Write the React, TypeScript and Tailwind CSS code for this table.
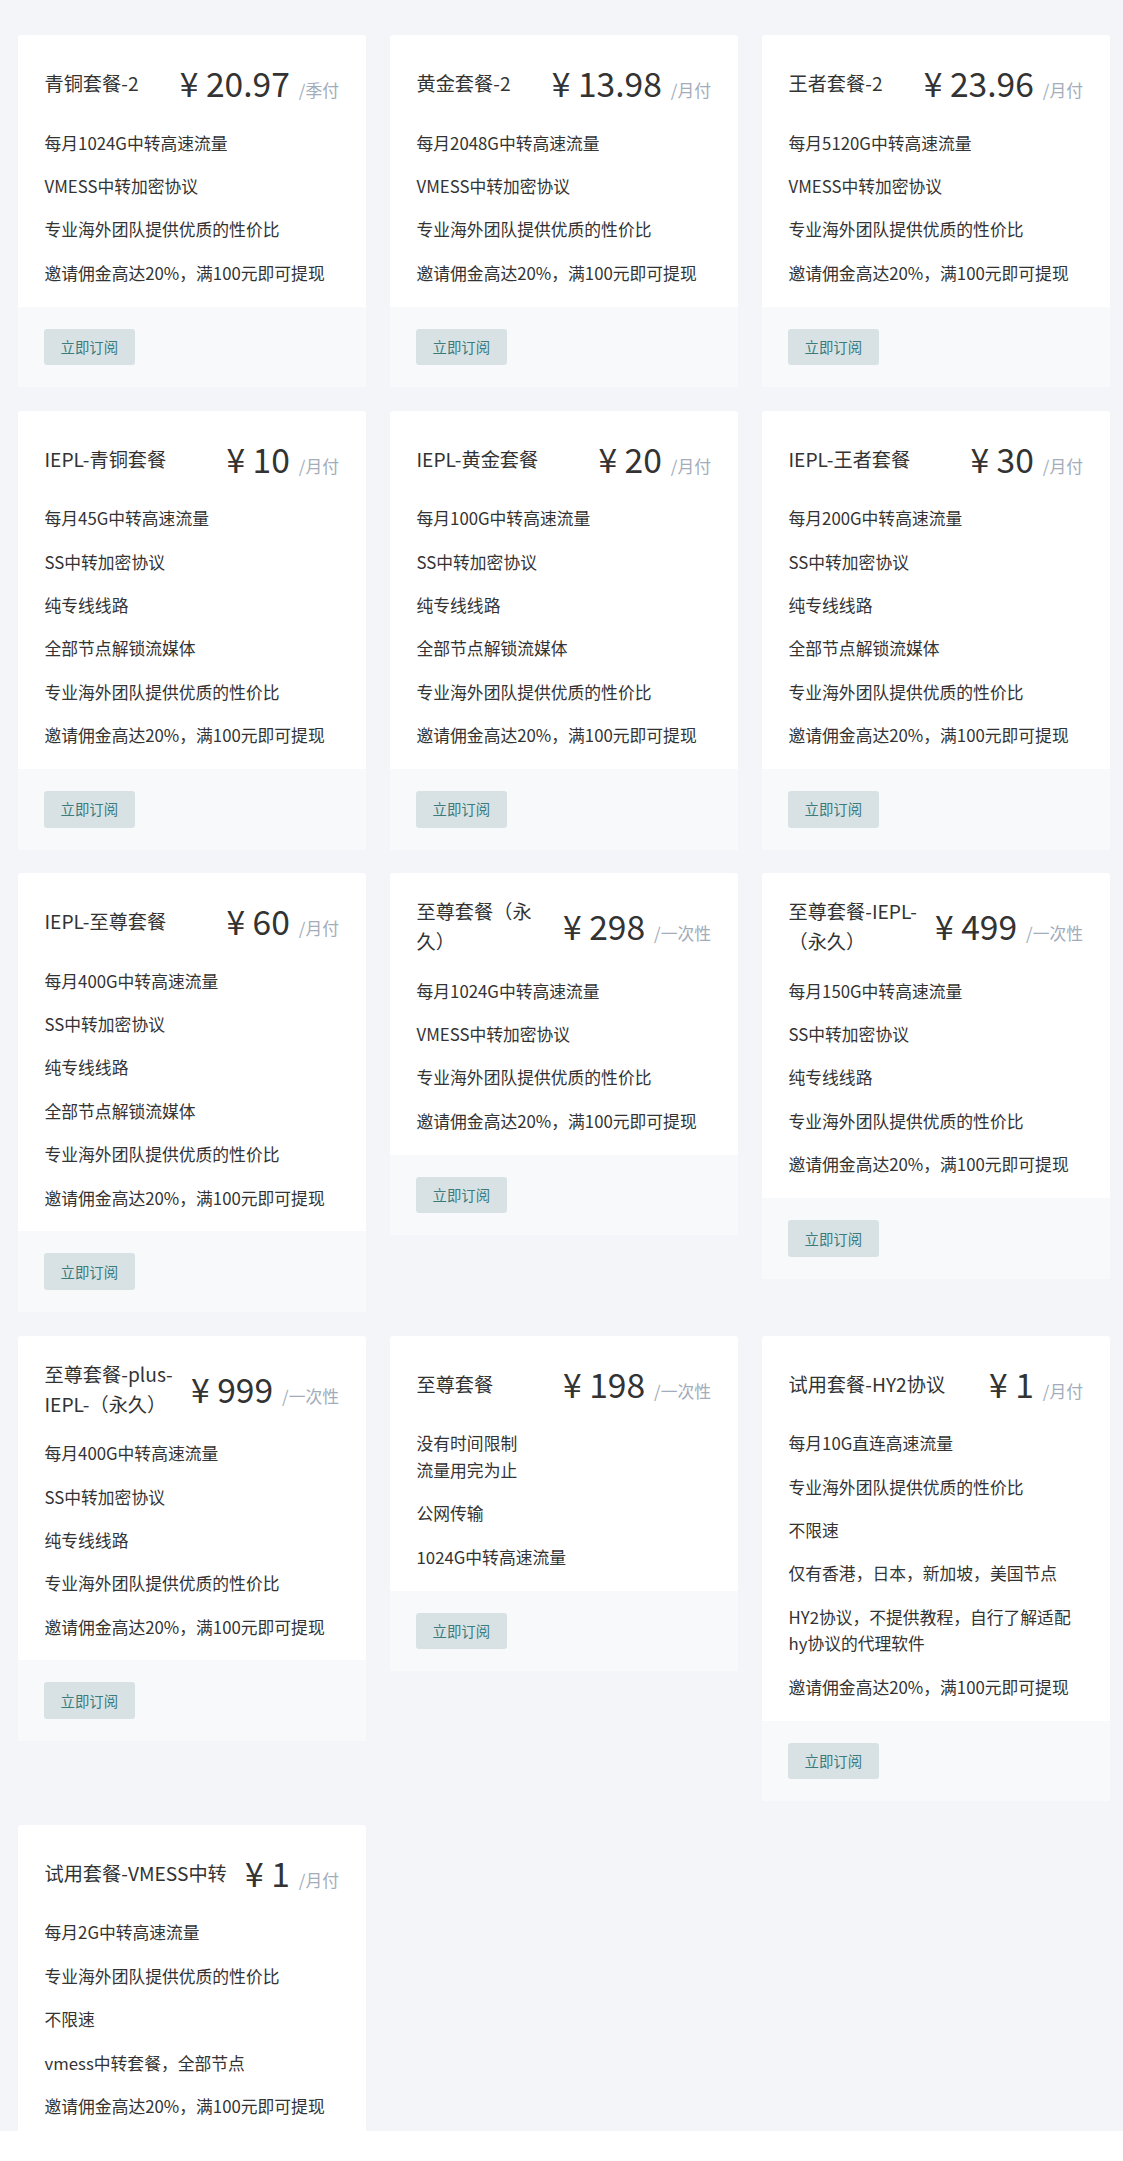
import React from "react";

type Plan = {
  name: string;
  price: string;
  period: string;
  features: string[];
};

const common = "专业海外团队提供优质的性价比";
const invite = "邀请佣金高达20%，满100元即可提现";

const plans: Plan[] = [
  { name: "青铜套餐-2", price: "20.97", period: "/季付", features: ["每月1024G中转高速流量", "VMESS中转加密协议", common, invite] },
  { name: "黄金套餐-2", price: "13.98", period: "/月付", features: ["每月2048G中转高速流量", "VMESS中转加密协议", common, invite] },
  { name: "王者套餐-2", price: "23.96", period: "/月付", features: ["每月5120G中转高速流量", "VMESS中转加密协议", common, invite] },
  { name: "IEPL-青铜套餐", price: "10", period: "/月付", features: ["每月45G中转高速流量", "SS中转加密协议", "纯专线线路", "全部节点解锁流媒体", common, invite] },
  { name: "IEPL-黄金套餐", price: "20", period: "/月付", features: ["每月100G中转高速流量", "SS中转加密协议", "纯专线线路", "全部节点解锁流媒体", common, invite] },
  { name: "IEPL-王者套餐", price: "30", period: "/月付", features: ["每月200G中转高速流量", "SS中转加密协议", "纯专线线路", "全部节点解锁流媒体", common, invite] },
  { name: "IEPL-至尊套餐", price: "60", period: "/月付", features: ["每月400G中转高速流量", "SS中转加密协议", "纯专线线路", "全部节点解锁流媒体", common, invite] },
  { name: "至尊套餐（永久）", price: "298", period: "/一次性", features: ["每月1024G中转高速流量", "VMESS中转加密协议", common, invite] },
  { name: "至尊套餐-IEPL-（永久）", price: "499", period: "/一次性", features: ["每月150G中转高速流量", "SS中转加密协议", "纯专线线路", common, invite] },
  { name: "至尊套餐-plus-IEPL-（永久）", price: "999", period: "/一次性", features: ["每月400G中转高速流量", "SS中转加密协议", "纯专线线路", common, invite] },
  { name: "至尊套餐", price: "198", period: "/一次性", features: ["没有时间限制\n流量用完为止", "公网传输", "1024G中转高速流量"] },
  {
    name: "试用套餐-HY2协议",
    price: "1",
    period: "/月付",
    features: ["每月10G直连高速流量", common, "不限速", "仅有香港，日本，新加坡，美国节点", "HY2协议，不提供教程，自行了解适配hy协议的代理软件", invite],
  },
  { name: "试用套餐-VMESS中转", price: "1", period: "/月付", features: ["每月2G中转高速流量", common, "不限速", "vmess中转套餐，全部节点", invite] },
];

const PlanCard = ({ plan }: { plan: Plan }) => (
  <div className="overflow-hidden rounded-[3px] bg-white">
    <div className="px-[27px] pb-[20px] pt-[23px]">
      <div className="flex items-center gap-3">
        <h3 className="flex-1 text-[19.2px] leading-[30px] font-normal text-[#333]">{plan.name}</h3>
        <div className="flex shrink-0 items-baseline">
          <span className="text-[33.6px] leading-[50px] text-[#333]">¥ {plan.price}</span>
          <span className="ml-[9px] text-[16.8px] text-[#a3acba]">{plan.period}</span>
        </div>
      </div>
      <ul className="mt-[21.6px] flex flex-col gap-[16.6px]">
        {plan.features.map((f, i) => (
          <li key={i} className="whitespace-pre-line text-[16.8px] leading-[26.8px] text-[#333]">
            {f}
          </li>
        ))}
      </ul>
    </div>
    <div className="bg-[#f8f9fb] px-[26.5px] py-[22px]">
      <button className="h-[36.6px] rounded-[3px] bg-[#d8e2e4] px-[16.5px] text-[14.4px] text-[#3b7b7e]">
        立即订阅
      </button>
    </div>
  </div>
);

export default function App() {
  return (
    <div className="font-['Noto_Sans_CJK_SC','Noto_Sans',sans-serif]">
      <div className="h-[2131px] overflow-hidden bg-[#f4f5f9] pl-[17.5px] pr-[13px] pt-[35px]">
        <div className="grid grid-cols-3 items-start gap-[23.5px]">
          {plans.map((p) => (
            <PlanCard key={p.name} plan={p} />
          ))}
        </div>
      </div>
    </div>
  );
}
